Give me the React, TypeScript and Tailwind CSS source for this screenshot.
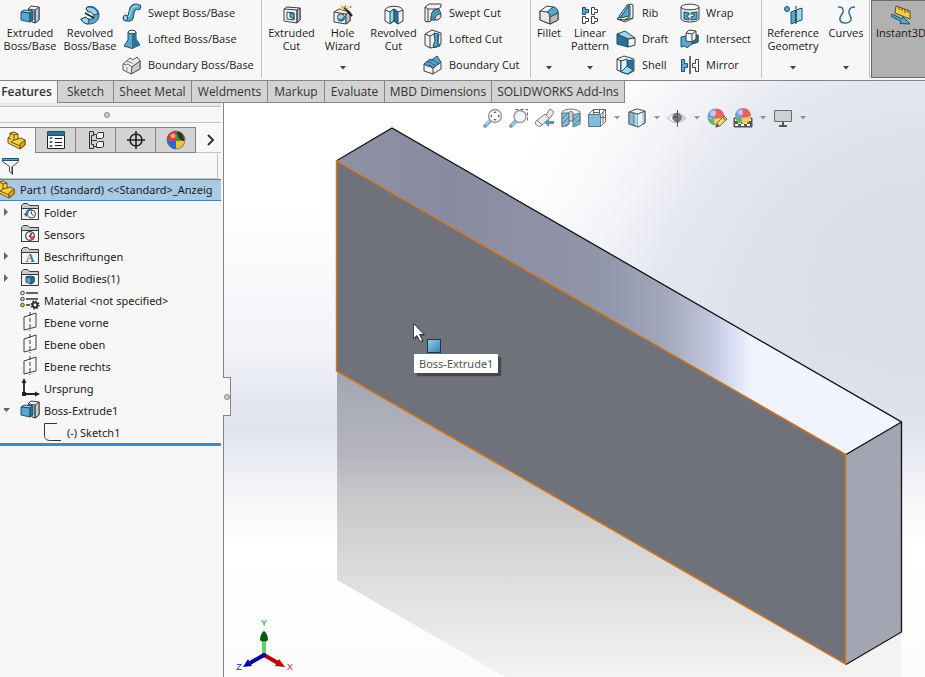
import React from 'react';

const INK = '#3d4043';
const BLUE = '#5ba7cc';
const LIGHT = '#9fd4ea';
const DARK = '#2c7298';
const PALE = '#f2f3f4';

interface IconProps {
  children: React.ReactNode;
  className?: string;
}

const Svg: React.FC<IconProps> = ({ children, className = 'h-5 w-5' }) => (
  <svg viewBox="0 0 20 20" className={`${className} shrink-0`} fill="none" stroke={INK} strokeWidth="1" strokeLinejoin="round" aria-hidden="true">
    {children}
  </svg>
);

/* ---------- Ribbon icons ---------- */

const ExtrudeIcon = () => (
  <Svg>
    <path d="M8 4l3-3 8 1v13l-4 3-3-1V6z" fill={PALE} />
    <path d="M15 5l4-3v13l-4 3z" fill="#c9ccce" />
    <path d="M8 4l7 1v13" />
    <path d="M1 7l3-2 9 1-3 2z" fill={LIGHT} stroke="#1b526f" />
    <path d="M1 7l9 1v9l-9-2z" fill={BLUE} stroke="#1b526f" />
    <path d="M10 8l3-2v9l-3 2z" fill={DARK} stroke="#1b526f" />
  </Svg>
);

const RevolveIcon = () => (
  <Svg>
    <path d="M6 3c5-4 13 0 13 7 0 6-5 9-10 9-4 0-7-2-8-5l5-2c1 2 5 3 7 1 3-3-1-7-5-6z" fill={BLUE} stroke="#1b526f" />
    <path d="M6 3c5-3 11 1 12 6l-5 1C12 7 10 6 8 7z" fill={LIGHT} stroke="#1b526f" />
    <path d="M1 14l5-2 3 3-1 4c-3 0-6-2-7-5z" fill={LIGHT} stroke="#1b526f" />
    <path d="M5 8l9 5" strokeWidth="1.6" stroke="#222" />
  </Svg>
);

const SweptBossIcon = () => (
  <Svg>
    <path d="M4 15c7 2 4-4 6-7 1-4 3-5 6-4" stroke="#1b526f" strokeWidth="6.500" strokeLinecap="round" />
    <path d="M4 15c7 2 4-4 6-7 1-4 3-5 6-4" stroke={BLUE} strokeWidth="4.500" strokeLinecap="round" />
    <path d="M5 14c4 0 2-3 4-7 1-3 4-4 7-4" stroke={LIGHT} strokeWidth="1.300" />
    <ellipse cx="3.500" cy="15" rx="2.200" ry="2.800" fill={LIGHT} stroke="#1b526f" />
  </Svg>
);

const LoftedBossIcon = () => (
  <Svg>
    <path d="M6 3v8l-4 6 8 2.500 8-3.500-4-6V3z" fill={BLUE} stroke="#1b526f" />
    <path d="M10 4h3.500v6l4 6-7.500 3z" fill={DARK} stroke="none" />
    <ellipse cx="10" cy="3" rx="4" ry="1.800" fill="#e9f3f8" />
  </Svg>
);

const BoundaryBossIcon = () => (
  <Svg>
    <path d="M1 9l7-6 3 2 4-3 3 4v8l-9 5-8-4z" fill="#ececec" stroke="#55585a" />
    <path d="M1 9c3 2 4-1 6 1l3 2 8-6M5 6c3 2 4 0 6 3" stroke="#6c6f72" />
    <path d="M10 12l8-6v8l-9 5z" fill="#c9cbcd" stroke="#55585a" />
    <path d="M5 12v4" stroke="#8c8f92" />
  </Svg>
);

const ExtrudedCutIcon = () => (
  <Svg>
    <path d="M2 4l3-2 13 1v12l-3 3-13-2z" fill={PALE} />
    <path d="M15 5l3-2v12l-3 3z" fill="#bfc2c4" />
    <path d="M2 4l13 1v13" />
    <path d="M5 7l7 1v7l-7-1z" fill="#fff" />
    <path d="M8 8l4 .5V14l-4-2z" fill={BLUE} stroke="#1b526f" />
  </Svg>
);

const HoleWizardIcon = () => (
  <Svg>
    <path d="M1 7l5-3 11 3v9l-4 3-12-2z" fill={PALE} />
    <path d="M1 7l12 2v10" />
    <path d="M13 9l4-2v9l-4 3z" fill="#bfc2c4" />
    <ellipse cx="8" cy="12.500" rx="3.500" ry="3.700" fill={LIGHT} />
    <path d="M6 14c1 2 5 1 5-2" stroke={DARK} strokeWidth="2" />
    <path d="M11 2l8 9" stroke="#222" strokeWidth="2.200" />
    <path d="M8 1l3 2M13 0l-1 3M8 5l2-1M15 3l-2 1" stroke="#e8a424" strokeWidth="1.500" />
    <circle cx="17.500" cy="2" r="1" fill="#e55b2b" stroke="none" />
  </Svg>
);

const RevolvedCutIcon = () => (
  <Svg>
    <path d="M1 5c2-5 16-5 18 0v11l-5 3-4-3-4 3-5-3z" fill={PALE} />
    <path d="M1 5l5 2 4-3 4 3 5-2" />
    <path d="M6 7l4-3v12l-4 2z" fill={LIGHT} stroke="#1b526f" />
    <path d="M10 4l4 3v12l-4-3z" fill={DARK} stroke="#1b526f" />
  </Svg>
);

const SweptCutIcon = () => (
  <Svg>
    <path d="M2 4l4-3h12v3l-3 2C9 6 8 10 8 18l-3 1-3-1z" fill={PALE} />
    <path d="M2 4l3 2h10M5 6v13" />
    <path d="M8 17c0-7 2-10 8-11l2 5c-4 0-6 2-6 6z" fill={BLUE} stroke="#1b526f" />
    <path d="M10 17c0-5 2-8 7-9" stroke={DARK} />
    <path d="M12 17c0-4 2-6 6-6v3l-3 3z" fill="#d8dadb" />
  </Svg>
);

const LoftedCutIcon = () => (
  <Svg>
    <path d="M2 5l7-4 9 3v11l-4 3-7 1-5-3z" fill={PALE} />
    <path d="M2 5l5 2v12M7 7l4-2" />
    <path d="M11 4l5 1-1 8 2 4-5 1-2-1 2-5z" fill={BLUE} stroke="#1b526f" />
    <path d="M14 5l2 1-1 7 2 4-3 1z" fill={DARK} stroke="none" />
  </Svg>
);

const BoundaryCutIcon = () => (
  <Svg>
    <path d="M1 9l9 4 8-6v7l-8 5-9-3z" fill={PALE} />
    <path d="M10 13v6" />
    <path d="M1 9l6-5 2 1 5-4 4 6-8 6-3-3-3 1z" fill={BLUE} stroke="#1b526f" />
    <path d="M4 7c4-1 4 2 8 3M8 5c3-1 3 2 7 3" stroke="#1b526f" />
  </Svg>
);

const FilletIcon = () => (
  <Svg>
    <path d="M1 6l7-5 6 1c4 1 5 4 5 6v7l-8 4-10-4z" fill={PALE} />
    <path d="M1 6l7 1c2 1 3 3 3 5v7L1 15z" fill="#e6e7e8" />
    <path d="M8 7l6-5c3 0 5 3 5 6l-8 4c0-3-1-5-3-5z" fill={BLUE} stroke="#1b526f" />
    <path d="M11 12l8-4v7l-8 4z" fill="#bcbfc1" />
  </Svg>
);

const LinearPatternIcon = () => (
  <Svg>
    <path d="M2.500 2.500h3v2h3v3h-3v2h-3z" fill={BLUE} stroke="#1b526f" />
    <g fill="#fff">
      <path d="M11.500 2.500h3v2h3v3h-3v2h-3z" />
      <path d="M2.500 11.500h3v2h3v3h-3v2h-3z" />
      <path d="M11.500 11.500h3v2h3v3h-3v2h-3z" />
    </g>
  </Svg>
);

const RibIcon = () => (
  <Svg>
    <path d="M12 2l3-1 2 1v13l-8 4-8-3 2-2 9-1z" fill={PALE} />
    <path d="M14 3v11l-6 3M1 16l8 1 8-2" />
    <path d="M13 2v11l-9 2z" fill={BLUE} stroke="#1b526f" />
    <path d="M13 2L4 15l-1-2 8-11z" fill={LIGHT} stroke="#1b526f" />
  </Svg>
);

const DraftIcon = () => (
  <Svg>
    <path d="M1 5l8-3 10 7-7 1z" fill={LIGHT} stroke="#1b526f" />
    <path d="M1 5l11 5v8L1 15z" fill={DARK} stroke="#1b526f" />
    <path d="M12 10l7-1v7l-7 2z" fill={PALE} />
  </Svg>
);

const ShellIcon = () => (
  <Svg>
    <path d="M1 4l7-3 10 3v12l-6 3L1 15z" fill={PALE} />
    <path d="M1 4l4 2v11" />
    <path d="M5 6l12-1v10l-5 4-7-2z" fill={DARK} stroke="#1b526f" />
    <path d="M5 6l6-2v7l-6 6z" fill="#e5f1f7" stroke="#1b526f" />
    <path d="M5 17l6-6 6 4-5 4z" fill={LIGHT} stroke="#1b526f" />
  </Svg>
);

const WrapIcon = () => (
  <Svg>
    <path d="M1 4v12c2 4 16 4 18 0V4z" fill="#e4e6e7" />
    <ellipse cx="10" cy="4" rx="9" ry="2.800" fill="#fafafa" />
    <path d="M4 9l5 1v2H7v2l2 1v2l-5-1zM11 10l6-1v7l-6 1v-3l3-1v-2h-3z" fill={BLUE} stroke="#1b526f" />
  </Svg>
);

const IntersectIcon = () => (
  <Svg>
    <path d="M1 8l5-1 12-1v7l-6 2-5 4-2-2-4 1z" fill={BLUE} stroke="#1b526f" />
    <path d="M12 15l6-2V6l-3 2z" fill={DARK} stroke="#1b526f" />
    <path d="M6 4l3-3 7 1v8l-4 3-6-1z" fill={PALE} />
    <path d="M6 4l6 1v8M12 5l4-3" />
  </Svg>
);

const MirrorIcon = () => (
  <Svg>
    <path d="M1.500 4.500h3v4h3v4h-3v4h-3z" fill={BLUE} stroke="#1b526f" />
    <path d="M18.500 4.500h-3v4h-3v4h3v4h3z" fill="#fff" />
    <path d="M10 1v18" stroke="#222" strokeWidth="1.300" />
  </Svg>
);

const ReferenceIcon = () => (
  <Svg>
    <circle cx="4" cy="4" r="2.500" fill={BLUE} stroke="#1b526f" />
    <path d="M8 7l5-2v12l-5 2z" fill={BLUE} stroke="#1b526f" />
    <path d="M13 5l6-2v12l-6 2z" fill={LIGHT} stroke="#1b526f" />
    <path d="M13 1v18" stroke="#222" strokeDasharray="3 1" />
  </Svg>
);

const CurvesIcon = () => (
  <Svg>
    <path d="M2 2c4 0 6 1 5 5-1 3-4 5-3 8 1 4 9 4 11 0 1-4-3-5-2-9 1-3 2-4 6-4" stroke="#2e6f93" strokeWidth="1.500" />
  </Svg>
);

const InstantIcon = () => (
  <Svg>
    <path d="M5 1l14 5v8L4 8z" fill="#f6cf4a" stroke="#5c4d18" />
    <path d="M8 2v3M11 3v3M14 4v4M17 5v3" stroke="#5c4d18" />
    <path d="M1 9l10 5 1-2 7 7-10-.5 1-2L0 11z" fill={BLUE} stroke="#1b526f" />
  </Svg>
);

/* ---------- Feature tree icons ---------- */

const PartIcon = ({ className = 'h-5 w-5' }: { className?: string }) => (
  <Svg className={className}>
    <path d="M1 7l2-2V2l4-1 4 2v5l3-1 4 2v5l-5 4L1 12z" fill="#f7cf45" stroke="#6b520f" />
    <path d="M3 2l4 2 4-1M7 4v5l-3 2 9 4 5-5M7 9l4-1M1 7l3 1M13 15v3" stroke="#6b520f" />
    <path d="M13 13l5-4v5l-5 4z" fill="#dca51f" stroke="#6b520f" />
  </Svg>
);

const FolderBase = ({ children }: { children: React.ReactNode }) => (
  <Svg>
    <path d="M1.500 17.500v-14l2-2h4l2 2h9v14z" fill="#c9caca" stroke="#3a3a3a" />
    <path d="M1.500 6.500h17v11h-17z" fill="#f4f4f4" stroke="#3a3a3a" />
    {children}
  </Svg>
);

const HistoryFolderIcon = () => (
  <FolderBase>
    <circle cx="11.500" cy="12" r="4" fill="#fff" />
    <path d="M11.500 9.500V12l2 1.500" />
    <path d="M12 8c-4-1-6 1-6 4" stroke={DARK} strokeWidth="1.500" />
    <path d="M3.500 11.500h5L6 15z" fill={DARK} stroke="none" />
  </FolderBase>
);

const SensorFolderIcon = () => (
  <FolderBase>
    <circle cx="10" cy="12" r="4.300" fill="#fff" strokeWidth="1.300" />
    <path d="M10 12l4 1-3 3z" fill="#e5532d" stroke="#e5532d" />
    <path d="M9 13l3-4" strokeWidth="1.300" />
  </FolderBase>
);

const NotesFolderIcon = () => (
  <FolderBase>
    <text x="10" y="16" textAnchor="middle" fontFamily="Liberation Serif, serif" fontWeight="bold" fontSize="12" fill={DARK} stroke="none">A</text>
  </FolderBase>
);

const BodiesFolderIcon = () => (
  <FolderBase>
    <path d="M6 9l4-1 4 1v5l-3 2-5-2z" fill={BLUE} stroke="#174a66" />
    <path d="M6 9l5 1v6l3-2V9l-3 1" fill={DARK} stroke="#174a66" />
  </FolderBase>
);

const MaterialIcon = () => (
  <Svg>
    <g strokeWidth="1.600" stroke="#333">
      <path d="M6 3h12M6 9h12M6 15h4" />
    </g>
    <circle cx="2.500" cy="3" r="1.800" fill="#eee" />
    <circle cx="2.500" cy="9" r="1.800" fill={LIGHT} />
    <circle cx="2.500" cy="15" r="1.800" fill="#f5c728" />
    <circle cx="15" cy="15" r="2.400" fill="#fff" stroke="#333" strokeWidth="2" />
    <circle cx="15" cy="15" r="3.800" stroke="#333" strokeWidth="1.500" strokeDasharray="1.500 1.480" />
  </Svg>
);

const PlaneIcon = () => (
  <Svg>
    <path d="M4 5l12-4v14L4 18z" />
    <path d="M10 0v19" strokeDasharray="4 2" />
  </Svg>
);

const OriginIcon = () => (
  <Svg>
    <path d="M4 3v13h13" stroke="#222" strokeWidth="1.800" />
    <path d="M1.500 5L4 0l2.500 5zM15 13.500l5 2.500-5 2.500zM2 14h4v4H2z" fill="#222" stroke="none" />
  </Svg>
);

const SketchIcon = () => (
  <Svg>
    <path d="M14 1.500H1.500V13c0 4 2 5.500 6 5.500H18" stroke="#333" />
  </Svg>
);

const PropertiesIcon = () => (
  <Svg>
    <path d="M1.500 2.500h17v16h-17z" fill="#fff" stroke="#222" />
    <path d="M1.500 1.500h17v4h-17z" fill={DARK} stroke="#1b526f" />
    <path d="M9 8.500h7M9 12.500h7M9 15.500h7" stroke="#222" />
    <path d="M4 7.500h2v1H4zM4 11.500h2v1H4zM4 15.500h2v1H4z" fill={BLUE} stroke={DARK} />
  </Svg>
);

const ConfigurationIcon = () => (
  <Svg>
    <path d="M3.500 1.500h4v4h-2v9h2v4h-4zM6 10.500h5M8 4.500h3M8 16.500h3" stroke="#333" />
    <path d="M10.500 4.500l2-2h5v5l-2 1h-5zM10.500 13.500l2-2h5v5l-2 1h-5z" fill="#f5f5f5" stroke="#333" />
  </Svg>
);

const TargetIcon = () => (
  <Svg>
    <circle cx="10" cy="10" r="6" stroke="#222" strokeWidth="1.600" />
    <path d="M10 1v18M1 10h18" stroke="#222" strokeWidth="1.600" />
  </Svg>
);

const Ball = ({ cx, cy, r }: { cx: number; cy: number; r: number }) => (
  <g stroke="none" transform={`translate(${cx} ${cy}) scale(${r / 9})`}>
    <path d="M0-9C-6-9-9-4-9 0c3 2 5 2 7 2 0-4 0-7 2-11z" fill="#4a7fdc" />
    <path d="M0-9c6 0 9 5 9 9-4 2-7 2-11 2 0-4 0-7 2-11z" fill="#dd3a32" />
    <path d="M-9 0c2 2 4 2 7 2 0 3 1 5 2 7-5 0-9-4-9-9z" fill="#2fa83f" />
    <path d="M9 0c-3 2-7 2-11 2 0 3 1 5 2 7 5 0 9-4 9-9z" fill="#f3c52a" />
    <circle cx="-3" cy="-4" r="3" fill="#fff" opacity=".5" />
  </g>
);

const DisplayTabIcon = () => (
  <Svg>
    <path d="M10 1C5 1 1 5 1 9c3 2 6 2 9 2z" fill="#e0372d" stroke="none" />
    <path d="M1 9c0 5 4 10 9 10v-8c-3 0-6 0-9-2z" fill="#2f66d0" stroke="none" />
    <path d="M10 1c6 0 9 5 9 9-3 1-6 1-9 1z" fill="#2f9e3f" stroke="none" />
    <path d="M19 10c0 5-4 9-9 9v-8c3 0 6 0 9-1z" fill="#f3c52a" stroke="none" />
    <path d="M11 2c5 0 7 5 7 9-3 0-7-4-7-9z" fill="#2a2325" stroke="none" />
    <path d="M12 4c2 2 3 4 5 5" stroke="#a63a32" />
    <circle cx="7" cy="6" r="2.500" fill="#fff" opacity=".5" stroke="none" />
    <circle cx="10" cy="10" r="9" stroke="#555" strokeWidth=".7" />
  </Svg>
);

const FilterIcon = () => (
  <Svg>
    <path d="M2.500 3.500h16v2l-6 5v8l-3-3v-5l-7-5z" fill="#f8f8f8" stroke="#444" />
    <path d="M2.500 2.500h16v2h-16z" fill={BLUE} stroke="#1b526f" />
    <path d="M12 10v8l-1-1v-6l5-5z" fill="#888" stroke="none" />
  </Svg>
);

/* ---------- View toolbar icons ---------- */

const ZoomFitIcon = () => (
  <Svg>
    <path d="M2 18l5-5" stroke={DARK} strokeWidth="3.500" strokeLinecap="round" />
    <path d="M2.500 17.500L7 12" stroke={LIGHT} strokeWidth="1.500" />
    <circle cx="12" cy="8" r="6.500" fill="#f6f8fa" stroke="#777" strokeWidth="1.400" />
    <path d="M12 3l1.700 2h-3.400zM12 13l1.700-2h-3.400zM7 8l2-1.700v3.400zM17 8l-2-1.700v3.400z" fill="#333" stroke="none" />
  </Svg>
);

const ZoomAreaIcon = () => (
  <Svg>
    <path d="M6.500 1.500h12v13" stroke="#333" strokeDasharray="3 2" />
    <path d="M2 18l5-5" stroke={DARK} strokeWidth="3.500" strokeLinecap="round" />
    <path d="M2.500 17.500L7 13" stroke={LIGHT} strokeWidth="1.500" />
    <circle cx="11" cy="8.500" r="6" fill="#eef4f7" stroke="#777" strokeWidth="1.400" />
  </Svg>
);

const PreviousViewIcon = () => (
  <Svg>
    <path d="M1 13l9-7 1 1 4-6 4 3-4 6-1 1-8 7c-3 2-7-2-5-5z" fill="#e3e4e5" stroke="#555" />
    <path d="M10 6l5 5M2 12l5 5" stroke="#555" />
    <path d="M19 16h-5v3l-5-4.500 5-4V13h5z" fill={DARK} stroke="none" />
  </Svg>
);

const SectionIcon = () => (
  <Svg>
    <path d="M1 4c3-4 15-4 18 0v9l-6 2-1-6H8v6l-2 3-5 0z" fill="#e8e9ea" stroke="#444" />
    <path d="M1 5h7v11l-7 3z" fill={BLUE} stroke="#1b526f" />
    <path d="M12 7l7-2v11l-7 3z" fill={BLUE} stroke="#1b526f" />
    <path d="M1 11l6-6M1 16l7-7M12 13l6-6M13 17l6-6" stroke="#184f6d" />
    <path d="M8 5c0-2 4-2 4 0v8H8z" fill="#bfc2c4" />
  </Svg>
);

const OrientationIcon = () => (
  <Svg>
    <path d="M1.500 6.500l5-5h12v12l-5 5M13.500 6.500l5-5M6.500 1.500v5M12.500 1.500v5M14 9.500h4M7 4.500h6M16 4v11" stroke="#333" />
    <path d="M1.500 6.500h12v12h-12z" fill={BLUE} stroke="#1b526f" />
  </Svg>
);

const DisplayStyleIcon = () => (
  <Svg>
    <path d="M2 4l8-3 8 2v12l-7 4-9-3z" fill={LIGHT} stroke="#333" />
    <path d="M2 4l9 2 7-3-8-2z" fill="#e4f4fb" stroke="#333" />
    <path d="M2 4l5 1v13l-5-2z" fill={BLUE} stroke="none" />
    <path d="M11 6v13M7 5v13" stroke="#1b526f" />
    <path d="M11 6l4-1.700v12.500L11 19z" fill="#e4f4fb" stroke="none" />
    <path d="M2 4l9 2 7-3M2 4v12l9 3 7-4V3" stroke="#333" />
  </Svg>
);

const HideShowIcon = () => (
  <Svg>
    <path d="M1 10c4-6 13-6 18 0-5 6-14 6-18 0z" fill="#fff" stroke="#999" />
    <path d="M10 5.600c4 0 7 2 9 4.400-2 2.500-5 4.400-9 4.400z" fill="#c7cacc" stroke="none" />
    <circle cx="10" cy="9.500" r="4.200" fill="#5b6064" stroke="#333" />
    <circle cx="8.500" cy="9" r="1.500" fill="#222" stroke="none" />
    <path d="M10.500 2v17" stroke="#222" />
  </Svg>
);

const AppearanceIcon = () => (
  <Svg>
    <Ball cx={9} cy={9} r={8.500} />
    <path d="M9 19l1-4 7-7 3 3-7 7z" fill="#f4cf4a" stroke="#4a3b10" />
    <path d="M8.500 19.500l1-4 3 2z" fill="#222" stroke="none" />
    <path d="M15.500 9l3 3" stroke="#c0392b" strokeWidth="1.500" />
  </Svg>
);

const SceneIcon = () => (
  <Svg>
    <path d="M1 10h18v9H1z" fill="#222" stroke="#222" />
    <path d="M2 11h3v2H2zM15 11h3v2h-3zM5 14h3v2H5zM11 14h3v2h-3zM2 16h3v2H2zM8 16h3v2H8zM14 16h3v2h-3z" fill="#fff" stroke="none" />
    <Ball cx={10} cy={8} r={8} />
  </Svg>
);

const MonitorIcon = () => (
  <Svg>
    <path d="M1.500 2.500h17v11h-17z" fill="#c5c9cc" stroke="#444" />
    <path d="M10 14v4M6 18h8" stroke="#222" strokeWidth="2" />
  </Svg>
);

/* ---------- Ribbon ---------- */

const Caret = ({ className = 'text-[#444]' }: { className?: string }) => (
  <svg viewBox="0 0 6 4" className={`h-1 w-1.5 ${className}`} fill="currentColor" aria-hidden="true">
    <path d="M0 0h6L3 3.500z" />
  </svg>
);

interface BigButtonProps {
  icon: React.ReactNode;
  label: string;
  className?: string;
  menu?: boolean;
}

const BigButton: React.FC<BigButtonProps> = ({ icon, label, className = 'w-[51px]', menu }) => (
  <button type="button" className={`flex shrink-0 flex-col items-center pt-[5px] text-center ${className}`}>
    {icon}
    <span className="mt-px h-7 whitespace-pre leading-[13px]">{label}</span>
    {menu && <Caret className="mt-3 text-[#444]" />}
  </button>
);

interface Command {
  icon: React.ReactNode;
  label: string;
}

const CommandList = ({ items, className = '' }: { items: Command[]; className?: string }) => (
  <div className={`flex shrink-0 flex-col ${className}`}>
    {items.map((item) => (
      <button key={item.label} type="button" className="flex h-[26px] items-center gap-1.5 whitespace-nowrap text-left">
        {item.icon}
        {item.label}
      </button>
    ))}
  </div>
);

const Group = ({ children, className = '' }: { children: React.ReactNode; className?: string }) => (
  <div className={`flex shrink-0 border-r border-[#c3c3c3] ${className}`}>{children}</div>
);

const Ribbon = () => (
  <header className="flex h-[81px] shrink-0 overflow-hidden border-b border-[#858585] bg-[#f7f7f7] pb-0.5 text-[11px]">
    <Group className="w-[262px]">
      <BigButton icon={<ExtrudeIcon />} label={'Extruded\nBoss/Base'} className="w-15" />
      <BigButton icon={<RevolveIcon />} label={'Revolved\nBoss/Base'} className="w-15" />
      <CommandList
        className="pl-0.5"
        items={[
          { icon: <SweptBossIcon />, label: 'Swept Boss/Base' },
          { icon: <LoftedBossIcon />, label: 'Lofted Boss/Base' },
          { icon: <BoundaryBossIcon />, label: 'Boundary Boss/Base' },
        ]}
      />
    </Group>

    <Group className="w-[269px] pl-1">
      <BigButton icon={<ExtrudedCutIcon />} label={'Extruded\nCut'} />
      <BigButton icon={<HoleWizardIcon />} label={'Hole\nWizard'} menu />
      <BigButton icon={<RevolvedCutIcon />} label={'Revolved\nCut'} />
      <CommandList
        className="pl-1"
        items={[
          { icon: <SweptCutIcon />, label: 'Swept Cut' },
          { icon: <LoftedCutIcon />, label: 'Lofted Cut' },
          { icon: <BoundaryCutIcon />, label: 'Boundary Cut' },
        ]}
      />
    </Group>

    <Group className="w-[231px]">
      <BigButton icon={<FilletIcon />} label="Fillet" className="w-9" menu />
      <BigButton icon={<LinearPatternIcon />} label={'Linear\nPattern'} className="w-[46px]" menu />
      <CommandList
        className="w-16 pl-[3px]"
        items={[
          { icon: <RibIcon />, label: 'Rib' },
          { icon: <DraftIcon />, label: 'Draft' },
          { icon: <ShellIcon />, label: 'Shell' },
        ]}
      />
      <CommandList
        className="pl-[3px]"
        items={[
          { icon: <WrapIcon />, label: 'Wrap' },
          { icon: <IntersectIcon />, label: 'Intersect' },
          { icon: <MirrorIcon />, label: 'Mirror' },
        ]}
      />
    </Group>

    <Group className="w-[108px]">
      <BigButton icon={<ReferenceIcon />} label={'Reference\nGeometry'} className="w-[62px]" menu />
      <BigButton icon={<CurvesIcon />} label="Curves" className="w-11" menu />
    </Group>

    <button type="button" aria-pressed="true" className="ml-px flex w-15 shrink-0 flex-col items-center border border-[#6a6a6a] bg-[#b1b1b1] pt-1">
      <InstantIcon />
      <span className="mt-px leading-[13px]">Instant3D</span>
    </button>
  </header>
);

const tabs = [
  { label: 'Sketch', width: 'w-14' },
  { label: 'Sheet Metal', width: 'w-[78px]' },
  { label: 'Weldments', width: 'w-[76px]' },
  { label: 'Markup', width: 'w-[57px]' },
  { label: 'Evaluate', width: 'w-[60px]' },
  { label: 'MBD Dimensions', width: 'w-[107px]' },
  { label: 'SOLIDWORKS Add-Ins', width: 'w-[133px]' },
];

const TabBar = () => (
  <nav className="relative flex h-[22px] shrink-0 whitespace-nowrap text-[#333]">
    <button type="button" className="w-[57px] bg-[#f7f7f7] pr-1 text-center font-semibold">Features</button>
    <div className="flex border-l border-[#858585]">
      {tabs.map((tab) => (
        <button key={tab.label} type="button" className={`${tab.width} border-r border-b border-[#858585] bg-[#d3d3d3] text-center`}>
          {tab.label}
        </button>
      ))}
    </div>
  </nav>
);

/* ---------- Feature tree ---------- */

interface TreeNode {
  icon: React.ReactNode;
  label: string;
  state?: 'open' | 'closed';
  nested?: boolean;
}

const nodes: TreeNode[] = [
  { icon: <HistoryFolderIcon />, label: 'Folder', state: 'closed' },
  { icon: <SensorFolderIcon />, label: 'Sensors' },
  { icon: <NotesFolderIcon />, label: 'Beschriftungen', state: 'closed' },
  { icon: <BodiesFolderIcon />, label: 'Solid Bodies(1)', state: 'closed' },
  { icon: <MaterialIcon />, label: 'Material <not specified>' },
  { icon: <PlaneIcon />, label: 'Ebene vorne' },
  { icon: <PlaneIcon />, label: 'Ebene oben' },
  { icon: <PlaneIcon />, label: 'Ebene rechts' },
  { icon: <OriginIcon />, label: 'Ursprung' },
  { icon: <ExtrudeIcon />, label: 'Boss-Extrude1', state: 'open' },
  { icon: <SketchIcon />, label: '(-) Sketch1', nested: true },
];

const panelTabs = [
  { name: 'Property manager', icon: <PropertiesIcon /> },
  { name: 'Configurations', icon: <ConfigurationIcon /> },
  { name: 'Dimensions', icon: <TargetIcon /> },
  { name: 'Display', icon: <DisplayTabIcon /> },
];

const FeaturePanel = () => (
  <aside className="relative flex w-56 shrink-0 flex-col border-r border-[#858585] bg-[#f7f7f7] pr-0.5 font-['Noto_Sans','Open_Sans',sans-serif] text-[11px]">
    <div className="h-1 border-b border-[#bdbdbd] bg-[#e4ebef]" />
    <div className="flex h-4 items-center justify-center border-b border-[#c3c3c3] pr-2">
      <span className="h-1.5 w-1.5 rounded-full border border-[#888] bg-[#ccc]" />
    </div>

    <div className="mt-1 flex h-[26px]">
      <button type="button" aria-label="Feature tree" className="flex w-[35px] items-center justify-center border-t border-[#858585] pr-0.5">
        <PartIcon />
      </button>
      <div className="flex border-l border-[#858585]">
        {panelTabs.map((tab) => (
          <button key={tab.name} type="button" aria-label={tab.name} className="flex w-10 items-center justify-center border-y border-r border-[#858585] bg-[#d3d3d3]">
            {tab.icon}
          </button>
        ))}
      </div>
      <button type="button" aria-label="More tabs" className="flex flex-1 items-center justify-center border-b border-[#c3c3c3] pl-1">
        <svg viewBox="0 0 8 12" className="h-3 w-2" fill="none" stroke="#333" strokeWidth="2" aria-hidden="true">
          <path d="M1 1l5 5-5 5" />
        </svg>
      </button>
    </div>

    <label className="mr-[3px] flex h-[26px] items-center border-r border-b border-[#c3c3c3]">
      <FilterIcon />
      <input type="text" aria-label="Filter" className="min-w-0 flex-1 bg-transparent outline-none" />
    </label>

    <div className="flex h-[22px] items-center gap-1 border-y border-[#4685b5] bg-[#a8cae5] whitespace-nowrap">
      <PartIcon className="-ml-1 h-5 w-5" />
      <span>{'Part1 (Standard) <<Standard>_Anzeig'}</span>
    </div>

    <ul className="border-b-3 border-[#3b8bc6]">
      {nodes.map((node) => (
        <li key={node.label} className={`flex h-[22px] items-center gap-1 whitespace-nowrap ${node.nested ? 'pl-[43px]' : ''}`}>
          {!node.nested && (
            <span className="flex w-4 pl-1">
              {node.state && (
                <button type="button" aria-label={node.state === 'open' ? 'Collapse' : 'Expand'}>
                  <svg viewBox="0 0 8 8" className="h-2 w-2" fill="#666" aria-hidden="true">
                    {node.state === 'open' ? <path d="M-1 2h7L2.500 6z" /> : <path d="M0 0l4 4-4 4z" />}
                  </svg>
                </button>
              )}
            </span>
          )}
          {node.icon}
          <span className="pt-0.5">{node.label}</span>
        </li>
      ))}
    </ul>

    {/* collapse handle on the splitter */}
    <button
      type="button"
      aria-label="Collapse panel"
      className="absolute top-[274px] -right-2 flex h-[39px] w-2 items-center justify-center border-y border-r border-[#858585] bg-[#f7f7f7]"
    >
      <span className="h-1.5 w-1.5 shrink-0 rounded-full border border-[#888] bg-[#ccc]" />
    </button>
  </aside>
);

/* ---------- Graphics area ---------- */

const Scene = () => (
  <svg className="absolute inset-0 h-full w-full bg-white" aria-hidden="true">
    <defs>
      <radialGradient id="glow" gradientUnits="userSpaceOnUse" cx="930" cy="250" r="470">
        <stop offset="0" stopColor="#d8dbe6" />
        <stop offset=".4" stopColor="#dee1eb" />
        <stop offset=".6" stopColor="#e8eaf1" />
        <stop offset="1" stopColor="#fff" stopOpacity="0" />
      </radialGradient>
      <linearGradient id="horizon" x1="0" y1="0" x2="0" y2="1">
        <stop offset=".2" stopColor="#dfe2ed" stopOpacity="0" />
        <stop offset=".45" stopColor="#dfe2ed" stopOpacity=".4" />
        <stop offset=".58" stopColor="#e0e3ed" />
        <stop offset=".64" stopColor="#ebedf3" />
        <stop offset=".7" stopColor="#f7f7fa" />
        <stop offset=".78" stopColor="#fff" />
        <stop offset="1" stopColor="#fcfcfc" />
      </linearGradient>
      <linearGradient id="mirror" gradientUnits="userSpaceOnUse" x1="0" y1="371" x2="0" y2="677">
        <stop offset="0" stopColor="#a3a5b3" />
        <stop offset=".27" stopColor="#b4b5bc" />
        <stop offset=".42" stopColor="#c9c9cb" />
        <stop offset=".68" stopColor="#dddddd" />
        <stop offset="1" stopColor="#f3f3f3" />
      </linearGradient>
      <linearGradient id="topFace" gradientUnits="userSpaceOnUse" x1="337" y1="0" x2="901" y2="0">
        <stop offset="0" stopColor="#8e91a4" />
        <stop offset=".2" stopColor="#898ca0" />
        <stop offset=".48" stopColor="#9296aa" />
        <stop offset=".58" stopColor="#a3a7ba" />
        <stop offset=".66" stopColor="#bfc5da" />
        <stop offset=".71" stopColor="#dde4f9" />
        <stop offset=".735" stopColor="#f0f4ff" />
        <stop offset="1" stopColor="#f2f6ff" />
      </linearGradient>
      <linearGradient id="swatch" x1="0" y1="0" x2="1" y2="1">
        <stop offset="0" stopColor="#8fd0ea" />
        <stop offset="1" stopColor="#3c83a8" />
      </linearGradient>
    </defs>
    <rect width="100%" height="100%" fill="url(#glow)" />
    <rect width="100%" height="100%" fill="url(#horizon)" />

    <g transform="translate(0 -81)">
      {/* floor reflection */}
      <path d="M337 371l509 293v13H505L337 580z" fill="url(#mirror)" />
      <path d="M846 664l55-31v44h-55z" fill="#f3f3f4" />

      {/* extruded body */}
      <path d="M337 161l55-33 509 294-55 32z" fill="url(#topFace)" />
      <path d="M846 454l55-32v210l-55 32z" fill="#a3a5b2" />
      <path d="M337 161l509 293v210L337 371z" fill="#6f727b" />
      <path d="M337 160.500l55-32.500 509.500 294v210L846 664.500M846 454.500l55.500-32.500" fill="none" stroke="#111" strokeWidth="1.300" />
      <path d="M336.500 161L845.500 454.500v209.500L336.500 371z" fill="none" stroke="#d9730d" strokeWidth="1.400" />

      {/* pointer with face badge */}
      <rect x="427.500" y="339.500" width="13" height="13" fill="url(#swatch)" stroke="#0d3c55" />
      <path d="M415 325v15l3.500-3 3 6 2.500-1.500-3-5.500h5z" fill="#000" opacity=".25" />
      <path d="M413.500 323.500v15l3.500-3 3 6 2.500-1.300-3-5.700h4.500z" fill="#fff" stroke="#222" strokeWidth=".8" />

      {/* axis triad */}
      <g strokeWidth="4">
        <path d="M264 655v-16" stroke="#63d070" />
        <path d="M264 655l14 8" stroke="#b80000" />
        <path d="M264 655l-14 8" stroke="#0000a8" />
      </g>
      <path d="M260 640c0-4 2-8 4-9 2 1 4 5 4 9-2 2-6 2-8 0z" fill="#075c0c" />
      <path d="M285 667l-10-1 4-7z" fill="#c00000" />
      <path d="M243 667l5-8 4 7z" fill="#0000b4" />
      <circle cx="264" cy="655" r="2" fill="#000090" />
      <g fontFamily="Liberation Sans, sans-serif" fontSize="9" textAnchor="middle">
        <text x="264" y="626" fill="#178a20">Y</text>
        <text x="290" y="670" fill="#e02020">X</text>
        <text x="239" y="670" fill="#2020e0">Z</text>
      </g>
    </g>
  </svg>
);

const viewTools = [
  { name: 'Zoom to fit', icon: <ZoomFitIcon /> },
  { name: 'Zoom to area', icon: <ZoomAreaIcon /> },
  { name: 'Previous view', icon: <PreviousViewIcon /> },
  { name: 'Section view', icon: <SectionIcon /> },
  { name: 'View orientation', icon: <OrientationIcon />, menu: true },
  { name: 'Display style', icon: <DisplayStyleIcon />, menu: true },
  { name: 'Hide or show items', icon: <HideShowIcon />, menu: true },
  { name: 'Edit appearance', icon: <AppearanceIcon /> },
  { name: 'Apply scene', icon: <SceneIcon />, menu: true },
  { name: 'View settings', icon: <MonitorIcon />, menu: true },
];

const Viewport = () => (
  <main className="relative min-w-0 flex-1">
    <div className="flex gap-1.5 pt-[5px] pl-[259px] opacity-75">
      {viewTools.map((tool) => (
        <button key={tool.name} type="button" aria-label={tool.name} className="flex shrink-0 items-center gap-[7px]">
          {tool.icon}
          {tool.menu && <Caret className="mr-px text-[#777]" />}
        </button>
      ))}
    </div>
    <div
      role="tooltip"
      className="absolute top-[251px] left-[190px] bg-white px-[5px] font-['Noto_Sans','Open_Sans',sans-serif] text-[11px] leading-[19px] text-[#555] shadow-[3px_3px_1px_#45474d]"
    >
      Boss-Extrude1
    </div>
  </main>
);

export const App: React.FC = () => (
  <div className="flex h-screen flex-col overflow-hidden bg-white font-['Open_Sans','Noto_Sans',sans-serif] text-[12px] leading-4 text-[#1a1a1a]">
    <Ribbon />
    <div className="relative flex min-h-0 flex-1 flex-col">
      <Scene />
      <TabBar />
      <div className="relative flex min-h-0 flex-1">
        <FeaturePanel />
        <Viewport />
      </div>
    </div>
  </div>
);

export default App;
